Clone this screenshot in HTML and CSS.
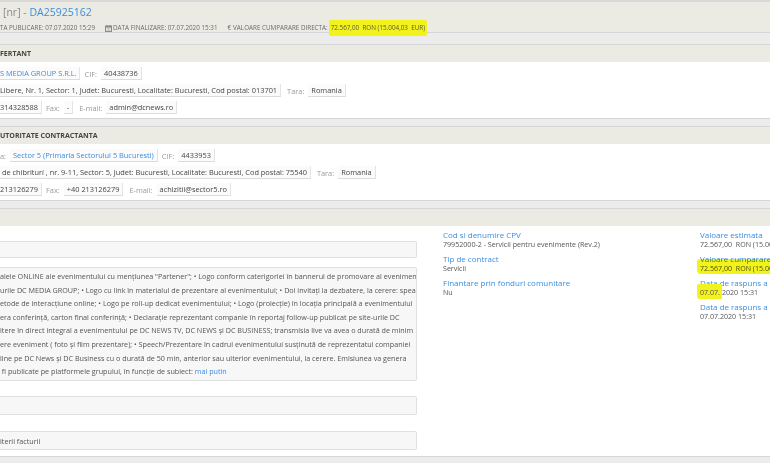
FILE: index.html
```html
<!DOCTYPE html>
<html lang="ro">
<head>
<meta charset="utf-8">
<title>DA25925162</title>
<link rel="stylesheet" href="styles.css">
</head>
<body>
<div class="page">
  <header class="top">
    <div class="title"><span class="nr">[nr] - </span><span class="code">DA25925162</span></div>
    <div class="meta">
      <span class="meta-item">TA PUBLICARE: 07.07.2020 15:29</span>
      <span class="meta-item"><svg class="cal" viewBox="0 0 7 7" width="7" height="7"><rect x="0.5" y="1" width="6" height="5.5" fill="none" stroke="#8a8a8a" stroke-width="1"/><rect x="0.5" y="1" width="6" height="1.6" fill="#8a8a8a"/><line x1="2" y1="0" x2="2" y2="1.5" stroke="#8a8a8a"/><line x1="5" y1="0" x2="5" y2="1.5" stroke="#8a8a8a"/><path d="M1.5 3.8h4M1.5 5.2h4M3.5 3v3" stroke="#b5b5b5" stroke-width="0.6"/></svg>DATA FINALIZARE: 07.07.2020 15:31</span>
      <span class="meta-item"><span class="euro">€</span>VALOARE CUMPARARE DIRECTA: <mark class="hl">72.567,00&nbsp; RON (15.004,03&nbsp; EUR)</mark></span>
    </div>
  </header>

  <section class="panel">
    <div class="panel-head">FERTANT</div>
    <div class="panel-body">
      <div class="row"><span class="val first link">S MEDIA GROUP S.R.L.</span><span class="lbl">CIF:</span><span class="val">40438736</span></div>
      <div class="row"><span class="val first">Libere, Nr. 1, Sector: 1, Judet: Bucuresti, Localitate: Bucuresti, Cod postal: 013701</span><span class="lbl wide">Tara:</span><span class="val">Romania</span></div>
      <div class="row"><span class="val first">314328588</span><span class="lbl">Fax:</span><span class="val">-</span><span class="lbl wide">E-mail:</span><span class="val">admin@dcnews.ro</span></div>
    </div>
  </section>

  <section class="panel">
    <div class="panel-head">UTORITATE CONTRACTANTA</div>
    <div class="panel-body">
      <div class="row"><span class="lbl">a:</span><span class="val link">Sector 5 (Primaria Sectorului 5 Bucuresti)</span><span class="lbl">CIF:</span><span class="val">4433953</span></div>
      <div class="row"><span class="val first">&nbsp;de chibriturí , nr. 9-11, Sector: 5, Judet: Bucuresti, Localitate: Bucuresti, Cod postal: 75540</span><span class="lbl wide">Tara:</span><span class="val">Romania</span></div>
      <div class="row"><span class="val first">213126279</span><span class="lbl">Fax:</span><span class="val">+40 213126279</span><span class="lbl wide">E-mail:</span><span class="val">achizitii@sector5.ro</span></div>
    </div>
  </section>

  <section class="panel last">
    <div class="panel-head"></div>
    <div class="panel-body details">
      <div class="col-left">
        <div class="box box-empty"></div>
        <div class="box desc">
          <div class="line">alele ONLINE ale evenimentului cu menţiunea "Partener"; • Logo conform caterigoriei în bannerul de promovare al evenimentului</div>
          <div class="line">urile DC MEDIA GROUP; • Logo cu link în materialul de prezentare al evenimentului; • Doi invitaţi la dezbatere, la cerere: speakeri</div>
          <div class="line">etode de interacţiune online; • Logo pe roll-up dedicat evenimentului; • Logo (proiecţie) în locaţia principală a evenimentului</div>
          <div class="line">era conferinţă, carton final conferinţă; • Declaraţie reprezentant companie în reportaj follow-up publicat pe site-urile DC</div>
          <div class="line">itere în direct integral a evenimentului pe DC NEWS TV, DC NEWS şi DC BUSINESS; transmisia live va avea o durată de minim</div>
          <div class="line">ere eveniment ( foto şi film prezentare); • Speech/Prezentare în cadrul evenimentului susţinută de reprezentatul companiei</div>
          <div class="line">line pe DC News şi DC Business cu o durată de 50 min, anterior sau ulterior evenimentului, la cerere. Emisiunea va genera</div>
          <div class="line">&nbsp;fi publicate pe platformele grupului, în funcţie de subiect: <span class="more">mai putin</span></div>
        </div>
        <div class="box box-mid"></div>
        <div class="box box-last">iterii facturii</div>
      </div>

      <div class="col-info">
        <div class="info-item"><div class="info-label">Cod si denumire CPV</div><div class="info-value">79952000-2 - Servicii pentru evenimente (Rev.2)</div></div>
        <div class="info-item"><div class="info-label">Tip de contract</div><div class="info-value">Servicii</div></div>
        <div class="info-item"><div class="info-label">Finantare prin fonduri comunitare</div><div class="info-value">Nu</div></div>
      </div>

      <div class="col-info right">
        <div class="info-item"><div class="info-label">Valoare estimata</div><div class="info-value">72.567,00&nbsp; RON (15.004,03&nbsp; EUR)</div></div>
        <div class="info-item marked"><div class="info-label">Valoare cumparare directa</div><div class="info-value">72.567,00&nbsp; RON (15.004,03&nbsp; EUR)</div></div>
        <div class="info-item"><div class="info-label">Data de raspuns a clarificarilor</div><div class="info-value"><span class="hl-date">07.07.</span>2020 15:31</div></div>
        <div class="info-item"><div class="info-label">Data de raspuns a solicitarilor</div><div class="info-value">07.07.2020 15:31</div></div>
      </div>
    </div>
  </section>
</div>
</body>
</html>
```

FILE: styles.css
```css
html, body {
  margin: 0;
  padding: 0;
}

body {
  width: 770px;
  height: 463px;
  overflow: hidden;
  background: #ececec;
  font-family: "Open Sans", "DejaVu Sans", sans-serif;
  color: #555;
}

.page {
  width: 770px;
}

/* ---------- top header ---------- */
.top {
  background: #ecebe3;
  border-top: 2px solid #d9d9d9;
  border-bottom: 1px solid #d6d6d6;
  padding-top: 3px;
  box-sizing: border-box;
  height: 33px;
}

.title {
  font-size: 10.5px;
  line-height: 14px;
  padding-left: 3px;
  color: #8a8a8a;
  white-space: nowrap;
}

.title .code {
  color: #3a8ee0;
}

.meta {
  margin-top: 1px;
  display: flex;
  align-items: center;
  gap: 10px;
  font-size: 6.3px;
  line-height: 10px;
  color: #6a6a6a;
  white-space: nowrap;
}

.meta-item {
  display: inline-flex;
  align-items: center;
}

.cal {
  margin-right: 1px;
  display: block;
}

.euro {
  margin-right: 2px;
}

.hl {
  background: #f2f21c;
  color: #5a5a3a;
  padding: 3px 2px 3px 2px;
  border-radius: 2px;
  margin-left: 1px;
}

/* ---------- panels ---------- */
.panel {
  background: #fff;
  border-top: 1px solid #d6d6d6;
  border-bottom: 1px solid #d6d6d6;
  margin-top: 7px;
}

.top + .panel {
  margin-top: 11px;
}

.panel-head {
  background: #ecebe3;
  height: 17px;
  line-height: 17px;
  font-size: 7px;
  font-weight: 700;
  color: #454545;
  white-space: nowrap;
}

.panel-body {
  padding: 3px 0 2px;
}

.row {
  height: 17px;
  display: flex;
  align-items: center;
  gap: 4px;
  font-size: 7.4px;
  white-space: nowrap;
}

.lbl {
  color: #9a9a9a;
}

.lbl.wide {
  margin-left: 2px;
}

.val {
  background: #fbfbfb;
  border-bottom: 1px solid #dcdcdc;
  border-right: 1px solid #e4e4e4;
  padding: 1px 3px;
  line-height: 10px;
  color: #454545;
}

.val.first {
  padding-left: 0;
}

.val.link {
  color: #3a8ee0;
}

/* ---------- details panel ---------- */
.details {
  display: grid;
  grid-template-columns: 417px 231px 1fr;
  column-gap: 26px;
  padding: 4px 0 0;
  height: 230px;
  box-sizing: border-box;
}

.col-left {
  display: flex;
  flex-direction: column;
  padding-top: 11px;
  min-width: 0;
}

.box {
  background: #f7f7f7;
  border: 1px solid #e0e0e0;
  border-left: none;
  border-radius: 0 2px 2px 0;
  box-sizing: border-box;
  font-size: 7.2px;
  color: #555;
  white-space: nowrap;
  overflow: hidden;
}

.box-empty {
  height: 17px;
  margin-bottom: 9px;
}

.desc {
  padding: 2px 0 2px;
  line-height: 13.6px;
  margin-bottom: 15px;
  height: 114px;
}

.line {
  white-space: nowrap;
  overflow: hidden;
  padding-right: 4px;
}

.more {
  color: #3a8ee0;
}

.box-mid {
  height: 19px;
  margin-bottom: 16px;
}

.box-last {
  height: 19px;
  line-height: 18px;
}

.col-info {
  white-space: nowrap;
  min-width: 0;
}

.info-item {
  margin-bottom: 5px;
}

.info-label {
  font-size: 8px;
  line-height: 10px;
  color: #3a8ee0;
}

.info-value {
  font-size: 7.1px;
  line-height: 9px;
  color: #555;
}

.info-item.marked {
  position: relative;
}

.info-item.marked::after {
  content: "";
  position: absolute;
  left: -3px;
  right: -2px;
  top: 5px;
  bottom: -1px;
  background: #f2f21c;
  mix-blend-mode: multiply;
  border-radius: 3px 0 0 4px;
}

.hl-date {
  background: #f2f21c;
  padding: 3px 2px 2px 3px;
  margin-left: -3px;
  border-radius: 2px 0 0 3px;
}
```
